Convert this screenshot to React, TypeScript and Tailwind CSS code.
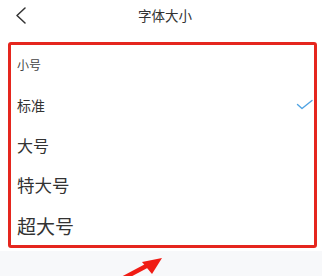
type Option = { label: string; size: string; selected?: boolean };

const options: Option[] = [
  { label: "小号", size: "text-[12px]" },
  { label: "标准", size: "text-[14px]", selected: true },
  { label: "大号", size: "text-[16px]" },
  { label: "特大号", size: "text-[17.5px]" },
  { label: "超大号", size: "text-[19px]" },
];

export default function App() {
  return (
    <div
      className="relative min-h-screen w-[322px] h-[276px] overflow-hidden bg-[#f7f8fa] text-[#333]"
      style={{ fontFamily: '"Noto Sans CJK SC", "Noto Sans", sans-serif' }}
    >
      <div className="bg-white pb-[3px]">
        {/* header */}
        <div className="relative flex h-8 items-center justify-center">
          <svg className="absolute left-[15px] top-[7px]" width="12" height="17" viewBox="0 0 12 17">
            <polyline
              points="10,1 2,8.5 10,16"
              fill="none"
              stroke="#333"
              strokeWidth="1.5"
              strokeLinecap="round"
              strokeLinejoin="round"
            />
          </svg>
          <h1 className="ml-[8px] text-[13.5px] leading-none text-[#333]">字体大小</h1>
        </div>

        {/* options */}
        <ul className="ml-2 mr-[5px] mt-[10px] rounded-[3px] border-[3px] border-[#e5261e]">
          {options.map((option) => (
            <li
              key={option.label}
              className={`flex h-10 items-center justify-between pl-[6px] pr-[0px] leading-none ${option.size}`}
            >
              <span className={option.label === "小号" ? "text-[#444]" : "text-[#333]"}>
                {option.label}
              </span>
              {option.selected && (
                <svg width="18" height="12" viewBox="0 0 18 12">
                  <polyline
                    points="1.5,5.5 6,9.5 16,1.5"
                    fill="none"
                    stroke="#4fa3e3"
                    strokeWidth="1.4"
                    strokeLinecap="round"
                    strokeLinejoin="round"
                  />
                </svg>
              )}
            </li>
          ))}
        </ul>
      </div>

      {/* annotation arrow */}
      <svg
        className="absolute left-[110px] top-[250px]"
        width="60"
        height="26"
        viewBox="0 0 60 26"
      >
        <line x1="10" y1="30" x2="42" y2="13" stroke="#f01c14" strokeWidth="4.5" />
        <polygon points="52,8 32,12 42,24" fill="#f01c14" />
      </svg>
    </div>
  );
}
